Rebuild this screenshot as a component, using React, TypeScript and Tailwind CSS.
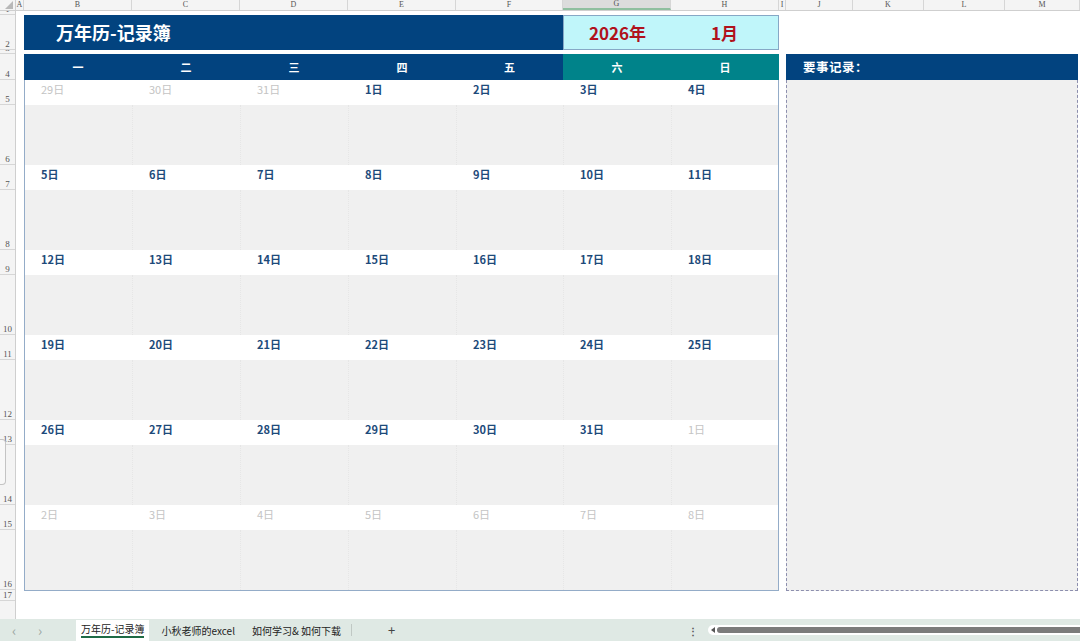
import React from 'react';

const CJK = '"Noto Sans CJK SC", "Noto Sans", sans-serif';
const SERIF = '"Liberation Serif", serif';

const weekdays = ['一', '二', '三', '四', '五', '六', '日'];

type Day = { label: string; faded: boolean };

// January 2026 starts on a Thursday; grid starts Monday Dec 29
const buildDays = (): Day[] => {
  const days: Day[] = [];
  [29, 30, 31].forEach((d) => days.push({ label: `${d}日`, faded: true }));
  for (let d = 1; d <= 31; d++) days.push({ label: `${d}日`, faded: false });
  for (let d = 1; d <= 8; d++) days.push({ label: `${d}日`, faded: true });
  return days;
};

const headerCols = [
  { w: 8, label: 'A' },
  { w: 108, label: 'B' },
  { w: 108, label: 'C' },
  { w: 108, label: 'D' },
  { w: 108, label: 'E' },
  { w: 107, label: 'F' },
  { w: 108, label: 'G', active: true },
  { w: 108, label: 'H' },
  { w: 7, label: 'I' },
  { w: 67, label: 'J' },
  { w: 71, label: 'K' },
  { w: 81, label: 'L' },
  { w: 75, label: 'M' },
];

const gutterRows: { h: number; n: string }[] = [
  { h: 4, n: '1' },
  { h: 35, n: '2' },
  { h: 4, n: '3' },
  { h: 26, n: '4' },
  ...Array.from({ length: 12 }, (_, i) => ({ h: i % 2 === 0 ? 25 : 60, n: String(i + 5) })),
  { h: 11, n: '17' },
];

const ColumnHeader = () => (
  <div className="flex h-[11px] shrink-0 border-b border-[#cfcfcf] bg-[#f4f4f4]" style={{ fontFamily: SERIF }}>
    <div className="relative w-[16px] shrink-0 border-r border-[#cfcfcf]">
      <div className="absolute right-[2px] bottom-[1px] h-0 w-0 border-b-[8px] border-l-[8px] border-b-[#b8b8b8] border-l-transparent" />
    </div>
    {headerCols.map((c) => (
      <div
        key={c.label}
        className={`flex shrink-0 items-center justify-center border-r border-[#d6d6d6] text-[8px] leading-none text-[#555] ${
          c.active ? 'bg-[#dcdcdc] border-b-2 border-b-[#8fbf9f]' : ''
        }`}
        style={{ width: c.w }}
      >
        {c.label}
      </div>
    ))}
  </div>
);

const Gutter = () => (
  <div className="relative flex w-[16px] shrink-0 flex-col border-r border-[#cfcfcf] bg-[#f4f4f4]" style={{ fontFamily: SERIF }}>
    {gutterRows.map((r) => (
      <div
        key={r.n}
        className="flex shrink-0 items-end justify-center overflow-hidden border-b border-[#d6d6d6] text-[9px] leading-[9px] text-[#555]"
        style={{ height: r.h }}
      >
        {r.n}
      </div>
    ))}
    <div className="flex-1" />
    <div className="absolute left-0 top-[428px] h-[46px] w-[6px] rounded-r-[4px] border border-l-0 border-[#c4c4c4] bg-[#f8f8f8]" />
  </div>
);

const Calendar = () => {
  const days = buildDays();
  const weeks = Array.from({ length: 6 }, (_, w) => days.slice(w * 7, w * 7 + 7));
  const cols = 'grid grid-cols-[108px_108px_108px_108px_107px_108px_108px]';
  return (
    <div className="flex w-[755px] shrink-0 flex-col pt-[4px]" style={{ fontFamily: CJK }}>
      <div className="flex h-[35px] shrink-0">
        <div className="flex w-[539px] items-center bg-[#02437f] pl-[32px] text-[18px] font-bold text-white">
          万年历-记录簿
        </div>
        <div className="grid w-[216px] grid-cols-2 items-center border border-[#86a8c6] bg-[#c0f6fa] text-[17px] font-bold text-[#b0121c]">
          <span className="text-center">2026年</span>
          <span className="text-center">1月</span>
        </div>
      </div>
      <div className="h-[4px] shrink-0" />
      <div className={`${cols} h-[26px] shrink-0`}>
        {weekdays.map((d, i) => (
          <div
            key={d}
            className={`flex items-center justify-center text-[11px] font-bold text-white ${
              i >= 5 ? 'bg-[#00838a]' : 'bg-[#02437f]'
            }`}
          >
            {d}
          </div>
        ))}
      </div>
      <div className="flex flex-col border-x border-b border-[#94acc8]">
        {weeks.map((wk, wi) => (
          <div key={wi} className="flex flex-col">
            <div className={`${cols} h-[25px] bg-white`}>
              {wk.map((d, di) => (
                <div
                  key={di}
                  className={`pl-[16px] pt-px text-[11px] leading-[16px] ${
                    d.faded ? 'font-normal text-[#c4c4c4]' : 'font-bold text-[#1d4a7a]'
                  }`}
                >
                  {d.label}
                </div>
              ))}
            </div>
            <div className={`${cols} h-[60px] bg-[#f0f0f0]`}>
              {wk.map((_, di) => (
                <div key={di} className={di < 6 ? 'border-r border-dotted border-[#e6e6e6]' : ''} />
              ))}
            </div>
          </div>
        ))}
      </div>
    </div>
  );
};

const Notes = () => (
  <div className="flex w-[292px] shrink-0 flex-col pt-[43px]" style={{ fontFamily: CJK }}>
    <div className="flex h-[26px] shrink-0 items-center bg-[#02437f] pl-[17px] text-[12.5px] font-bold tracking-[0.5px] text-white">
      要事记录：
    </div>
    <div className="h-[511px] shrink-0 border-x border-b border-dashed border-[#8d8fae] bg-[#f0f0f0]" />
  </div>
);

const TabBar = () => (
  <div className="flex h-[22px] shrink-0 items-center bg-[#dfe9e4] text-[10px] text-[#222]" style={{ fontFamily: CJK }}>
    <span className="w-[28px] text-center text-[14px] leading-none text-[#9aa5a0]">‹</span>
    <span className="w-[24px] text-center text-[14px] leading-none text-[#9aa5a0]">›</span>
    <div className="ml-[24px] flex h-[21px] items-center bg-white px-[5px]">
      <span className="border-b-2 border-[#1e6b45] leading-[14px]">万年历-记录簿</span>
    </div>
    <span className="ml-[12px]">小秋老师的excel</span>
    <span className="ml-[17px]">如何学习&amp; 如何下载</span>
    <span className="ml-[10px] h-[12px] border-l border-[#c0c8c4]" />
    <span className="ml-[36px] text-[13px] text-[#444]">+</span>
    <div className="flex-1" />
    <span className="mr-[10px] text-[10px] font-bold text-[#555]">⋮</span>
    <div className="flex h-[10px] w-[372px] items-center gap-[2px] rounded-l-[5px] bg-white pl-[3px]">
      <div className="h-0 w-0 border-y-[3px] border-r-[4px] border-y-transparent border-r-[#555]" />
      <div className="h-[6px] flex-1 rounded-l-[3px] bg-[#7b7b7b]" />
    </div>
  </div>
);

export default function App() {
  return (
    <div className="flex h-[641px] w-[1080px] flex-col overflow-hidden bg-white">
      <ColumnHeader />
      <div className="flex min-h-0 flex-1">
        <Gutter />
        <div className="flex flex-1 gap-[7px] pl-[8px]">
          <Calendar />
          <Notes />
        </div>
      </div>
      <TabBar />
    </div>
  );
}
